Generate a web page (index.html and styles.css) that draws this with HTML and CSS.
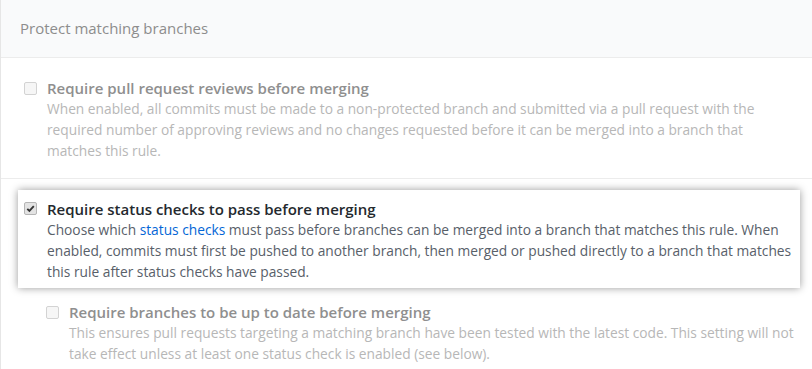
FILE: index.html
```html
<!DOCTYPE html>
<html lang="en">
<head>
<meta charset="utf-8">
<title>Protect matching branches</title>
<link rel="stylesheet" href="styles.css">
</head>
<body>
<div class="box">
  <div class="box-header">Protect matching branches</div>
  <div class="box-body">
    <div class="option dim">
      <span class="cb"></span>
      <div class="text">
        <div class="title">Require pull request reviews before merging</div>
        <p class="desc">When enabled, all commits must be made to a non-protected branch and submitted via a pull request with the required number of approving reviews and no changes requested before it can be merged into a branch that matches this rule.</p>
      </div>
    </div>
    <div class="divider"></div>
    <div class="spot">
      <div class="option active">
        <span class="cb checked"><svg viewBox="0 0 12 12" width="11" height="11"><path d="M2.5 6.3 L4.8 8.6 L9.6 3.4" fill="none" stroke="#333" stroke-width="2"/></svg></span>
        <div class="text">
          <div class="title">Require status checks to pass before merging</div>
          <p class="desc">Choose which <a href="#">status checks</a> must pass before branches can be merged into a branch that matches this rule. When enabled, commits must first be pushed to another branch, then merged or pushed directly to a branch that matches this rule after status checks have passed.</p>
        </div>
      </div>
    </div>
    <div class="option dim nested">
      <span class="cb"></span>
      <div class="text">
        <div class="title">Require branches to be up to date before merging</div>
        <p class="desc">This ensures pull requests targeting a matching branch have been tested with the latest code. This setting will not take effect unless at least one status check is enabled (see below).</p>
      </div>
    </div>
  </div>
</div>
</body>
</html>
```

FILE: styles.css
```css
html, body {
  margin: 0;
  padding: 0;
  background: #ffffff;
  overflow: hidden;
}
body {
  font-family: "Open Sans", "Noto Sans", sans-serif;
  font-size: 14px;
  line-height: 21px;
  width: 812px;
  height: 369px;
}
.box {
  border-left: 1px solid #e6e6e6;
  margin-right: -20px;
  height: 369px;
}
.box-header {
  height: 58px;
  box-sizing: border-box;
  background: #f9fafb;
  border-bottom: 1px solid #ececec;
  padding: 18px 19px 0;
  font-size: 15px;
  line-height: 20px;
  color: #8d8d8d;
}
.box-body {
  padding-top: 20px;
}
.option {
  display: flex;
  align-items: flex-start;
  gap: 10px;
}
.option.dim {
  padding-left: 23px;
}
.option.nested {
  padding-left: 45px;
  padding-top: 14px;
}
.cb {
  flex: none;
  width: 11px;
  height: 11px;
  margin-top: 4px;
  border: 1px solid #d3d3d3;
  border-radius: 2px;
  background: #f6f6f6;
  display: flex;
  align-items: center;
  justify-content: center;
}
.cb.checked {
  margin-top: 3px;
  border-color: #b5b5b5;
  background: #e3e3e3;
}
.text {
  flex: 1;
  min-width: 0;
}
.title {
  font-weight: 600;
  font-size: 15px;
  line-height: 20px;
  color: #8f8f8f;
}
.desc {
  margin: 0;
  max-width: 740px;
  font-size: 13.75px;
  color: #b7b7b7;
}
.divider {
  height: 1px;
  background: #ececec;
  margin-top: 17px;
}
.spot {
  margin: 11px 12px 0 17px;
  width: 782px;
  box-sizing: border-box;
  background: #ffffff;
  box-shadow: 0 0 8px rgba(0, 0, 0, 0.4);
  padding: 9px 0 6px 6px;
}
.option.active .title {
  color: #24292e;
}
.option.active .desc {
  color: #586069;
  max-width: none;
}
.desc a {
  color: #0366d6;
  text-decoration: none;
}
```
